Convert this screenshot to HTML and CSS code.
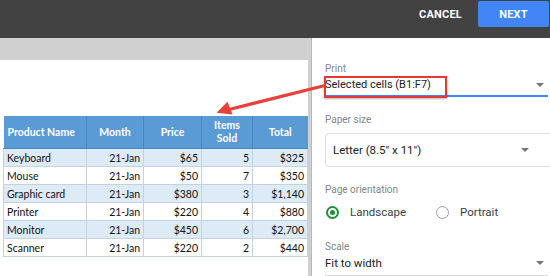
FILE: index.html
```html
<!DOCTYPE html>
<html lang="en">
<head>
  <meta charset="UTF-8" />
  <meta name="viewport" content="width=device-width, initial-scale=1.0" />
  <title>Print settings</title>
  <link rel="stylesheet" href="styles.css">
</head>
<body>
  <div id="topBar">
    <button class="bar-button cancel">CANCEL</button>
    <button class="bar-button next">NEXT</button>
  </div>

  <div id="main">
    <div id="preview">
      <div id="page">
        <table id="sheet">
          <colgroup>
            <col class="c-name"><col class="c-month"><col class="c-price"><col class="c-items"><col class="c-total">
          </colgroup>
          <thead>
            <tr>
              <th class="left">Product Name</th>
              <th>Month</th>
              <th>Price</th>
              <th>Items<br>Sold</th>
              <th>Total</th>
            </tr>
          </thead>
          <tbody>
            <tr><td>Keyboard</td><td>21-Jan</td><td>$65</td><td>5</td><td>$325</td></tr>
            <tr><td>Mouse</td><td>21-Jan</td><td>$50</td><td>7</td><td>$350</td></tr>
            <tr><td>Graphic card</td><td>21-Jan</td><td>$380</td><td>3</td><td>$1,140</td></tr>
            <tr><td>Printer</td><td>21-Jan</td><td>$220</td><td>4</td><td>$880</td></tr>
            <tr><td>Monitor</td><td>21-Jan</td><td>$450</td><td>6</td><td>$2,700</td></tr>
            <tr><td>Scanner</td><td>21-Jan</td><td>$220</td><td>2</td><td>$440</td></tr>
          </tbody>
        </table>
      </div>
    </div>

    <div id="settings">
      <div class="field-label first">Print</div>
      <div class="select underline-blue">
        <span class="print-value">Selected cells (B1:F7)</span>
        <span class="caret"></span>
      </div>

      <div class="field-label">Paper size</div>
      <div class="select boxed">
        <span>Letter (8.5" x 11")</span>
        <span class="caret"></span>
      </div>

      <div class="field-label">Page orientation</div>
      <div class="radios">
        <div class="radio-option"><span class="radio checked"></span>Landscape</div>
        <div class="radio-option"><span class="radio"></span>Portrait</div>
      </div>

      <div class="field-label scale">Scale</div>
      <div class="select underline-grey">
        <span>Fit to width</span>
        <span class="caret"></span>
      </div>
    </div>
  </div>

  <div id="highlight"></div>
  <svg id="pointer" width="550" height="276" viewBox="0 0 550 276">
    <line x1="323" y1="86" x2="229" y2="109.5" stroke="#e8403a" stroke-width="3.2" stroke-linecap="round"/>
    <polygon points="216.5,112.8 227.5,101.8 232.5,114.5" fill="#e8403a"/>
  </svg>
</body>
</html>
```

FILE: styles.css
```css
body {
  margin: 0;
  width: 550px;
  height: 276px;
  overflow: hidden;
  position: relative;
  font-family: Roboto, "Liberation Sans", sans-serif;
  background-color: #fff;
}

#topBar {
  height: 38px;
  background-color: #424242;
  display: flex;
  justify-content: flex-end;
  align-items: flex-start;
  padding: 1px 1px 0 0;
  box-sizing: border-box;
}

.bar-button {
  border: none;
  font-family: Roboto, "Liberation Sans", sans-serif;
  font-weight: bold;
  font-size: 11px;
  letter-spacing: 0.2px;
  color: #fff;
  height: 26px;
  padding: 0;
}

.cancel {
  background: none;
  padding-right: 16px;
}

.next {
  background-color: #4285f4;
  width: 71px;
  border-radius: 2px;
}

#main {
  display: flex;
  height: 238px;
}

#preview {
  width: 312px;
  background-color: #d0d0d0;
  border-right: 1px solid #b8b8b8;
  padding-top: 22px;
  box-sizing: border-box;
}

#page {
  width: 308px;
  height: 216px;
  background-color: #fff;
  padding: 56px 0 0 3px;
  box-sizing: border-box;
}

#sheet {
  border-collapse: collapse;
  font-family: Lato, "Open Sans", sans-serif;
  font-size: 10.5px;
  color: #111;
  table-layout: fixed;
  width: 304px;
}

.c-name { width: 83px; }
.c-month { width: 57px; }
.c-price { width: 58px; }
.c-items { width: 51px; }
.c-total { width: 55px; }

#sheet th {
  background-color: #5b9bd5;
  color: #fff;
  font-weight: bold;
  height: 32px;
  padding: 0;
  line-height: 13px;
  border-left: 1px solid #4a86c0;
  border-bottom: 1px solid #4a86c0;
}

#sheet th:first-child {
  border-left: none;
}

#sheet th.left {
  text-align: left;
  padding-left: 4px;
}

#sheet td {
  height: 17px;
  padding: 0 3px 0 3px;
  text-align: right;
  border: 1px solid #c3d1e0;
  white-space: nowrap;
}

#sheet td:first-child {
  text-align: left;
}

#sheet tbody tr:nth-child(odd) td {
  background-color: #ddebf7;
}

#settings {
  flex-grow: 1;
  padding: 0 2px 0 13px;
  color: #202124;
  font-size: 11.5px;
}

.field-label {
  font-size: 10px;
  line-height: 10px;
  color: #80868b;
  margin-top: 18px;
}

.field-label.first {
  margin-top: 26px;
}

.field-label.scale {
  margin-top: 22px;
}

.select {
  display: flex;
  justify-content: space-between;
  align-items: center;
  line-height: 16px;
}

.print-value {
  font-size: 11px;
}

.caret {
  width: 0;
  height: 0;
  border-left: 4px solid transparent;
  border-right: 4px solid transparent;
  border-top: 4px solid #757575;
  margin-right: 4px;
}

.underline-blue {
  margin-top: 3px;
  padding-bottom: 2px;
  border-bottom: 2px solid #4285f4;
}

.boxed {
  margin: 8px -12px 0 0;
  height: 34px;
  box-sizing: border-box;
  border: 1px solid #dadce0;
  border-radius: 4px;
  padding: 0 26px 0 7px;
}

.radios {
  display: flex;
  margin-top: 9px;
  height: 16px;
  align-items: center;
  padding-left: 1px;
}

.radio-option {
  display: flex;
  align-items: center;
  width: 110px;
  color: #3c4043;
}

.radio {
  width: 13px;
  height: 13px;
  border-radius: 50%;
  border: 1.5px solid #9e9e9e;
  box-sizing: border-box;
  margin-right: 11px;
  display: flex;
  align-items: center;
  justify-content: center;
}

.radio.checked {
  border: 2px solid #1e8e3e;
}

.radio.checked::after {
  content: "";
  width: 5px;
  height: 5px;
  border-radius: 50%;
  background-color: #1e8e3e;
}

.underline-grey {
  margin-top: 3px;
  padding-bottom: 4px;
  border-bottom: 1px solid #dadce0;
}

#highlight {
  position: absolute;
  left: 324px;
  top: 76px;
  width: 123px;
  height: 22px;
  box-sizing: border-box;
  border: 2px solid #e53935;
  box-shadow: 0 1px 2px rgba(0,0,0,0.3);
}

#pointer {
  position: absolute;
  left: 0;
  top: 0;
  pointer-events: none;
}
```
